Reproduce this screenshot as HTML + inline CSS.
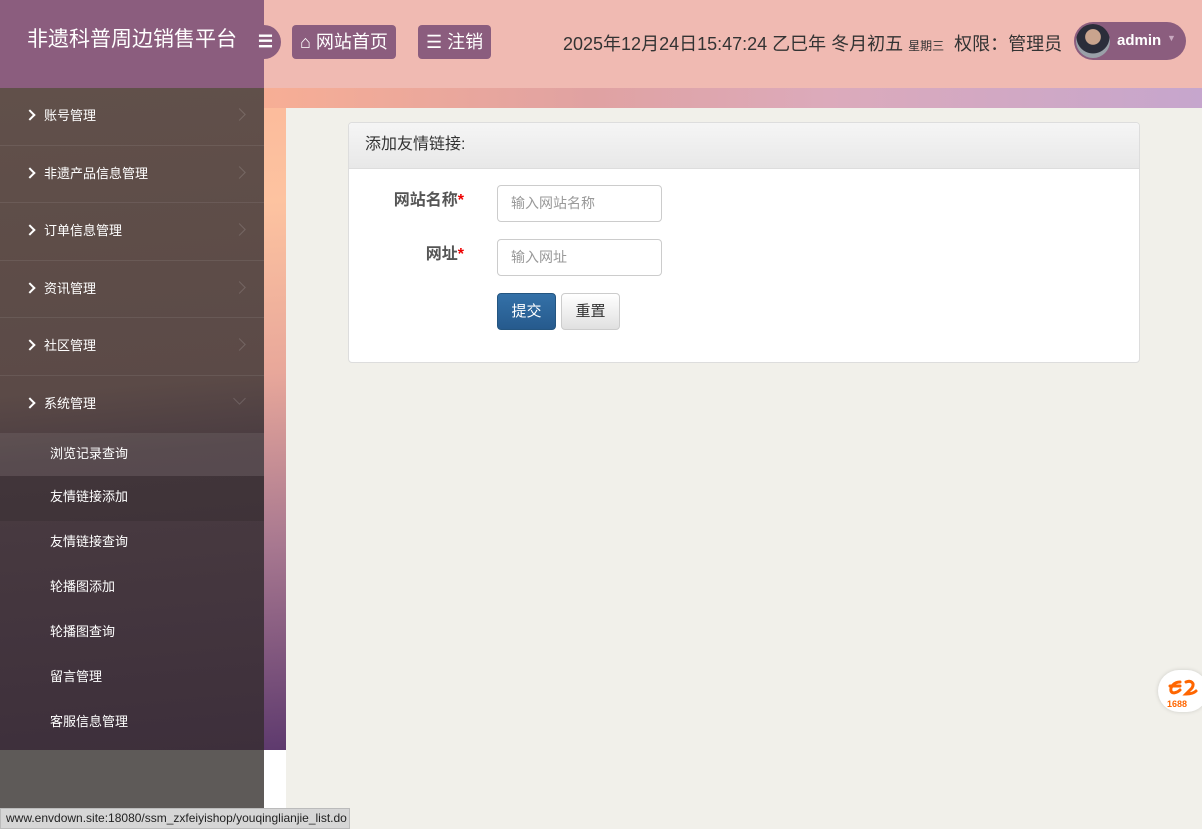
<!DOCTYPE html>
<html><head><meta charset="utf-8"><style>
*{margin:0;padding:0;box-sizing:border-box}
body{width:1202px;height:829px;overflow:hidden;position:relative;font-family:"Liberation Sans","Noto Sans CJK SC",sans-serif;background:#f1f0ea}
.bg{position:absolute;left:0;top:88px;width:286px;height:662px;background:linear-gradient(175deg,#fbb89a 0%,#fdc3a0 20%,#e8a79a 45%,#a87890 70%,#5e3a6e 100%)}
.strip{position:absolute;left:264px;top:88px;width:938px;height:20px;background:linear-gradient(90deg,#f7ae95,#e0a2a2 35%,#dcaabb 60%,#c6a6cd)}
.hdr{position:absolute;left:0;top:0;width:1202px;height:88px;background:#f0bab2}
.logo{position:absolute;left:0;top:0;width:264px;height:88px;background:#8b5d7e;color:#fff;font-size:21px;padding:23px 0 0 27px}
.tog{position:absolute;left:250px;top:25px;width:31px;height:34px;border-radius:0 17px 17px 0;background:#8b5d7e;color:#fff;font-size:17px;text-align:center;line-height:34px;font-weight:bold}
.btn{position:absolute;top:25px;height:34px;background:#8b5d7e;color:#fff;border-radius:4px;font-size:18px;line-height:34px;padding:0 8px}
.date{position:absolute;left:563px;top:30px;font-size:18px;color:#333}
.user{position:absolute;left:1074px;top:22px;width:112px;height:38px;border-radius:19px;background:#8b5d7e;color:#fff;font-size:15px}
.av{position:absolute;left:2px;top:2px;width:34px;height:34px;border-radius:50%;background:radial-gradient(circle at 50% 38%,#c9a48e 0 28%,#2b2d3a 30% 60%,#9aa0a8 62%)}
.side{position:absolute;left:0;top:88px;width:264px;height:662px;background:linear-gradient(175deg,#61504a,#5b4a47 45%,#4a3c41 55%,#3d2f3b)}
.m{height:57.5px;border-bottom:1px solid rgba(255,255,255,.08);color:#fff;font-size:13px;line-height:55px;padding-left:44px;position:relative}
.m:before{content:"";position:absolute;left:26px;top:23px;width:6px;height:6px;border-right:2px solid #fff;border-top:2px solid #fff;transform:rotate(45deg)}
.m:after{content:"";position:absolute;right:20px;top:22px;width:8px;height:8px;border-right:1px solid rgba(255,255,255,.15);border-top:1px solid rgba(255,255,255,.15);transform:rotate(45deg)}
.m.open:after{transform:rotate(135deg);top:18px}
.s{height:45px;line-height:42px;color:#fff;font-size:13px;padding-left:50px}
.sb{position:absolute;left:0;top:750px;width:264px;height:79px;background:#5e5a58}
.wb{position:absolute;left:264px;top:750px;width:22px;height:79px;background:#fff}
.status{position:absolute;left:0;top:808px;width:350px;height:21px;background:#d6d6d6;border:1px solid #bbb;font-size:12px;color:#222;line-height:19px;padding-left:5px}
.panel{position:absolute;left:348px;top:122px;width:792px;height:241px;background:#fff;border:1px solid #ddd;border-radius:4px}
.ph{height:46px;background:linear-gradient(#f5f5f5,#e8e8e8);border-bottom:1px solid #ddd;font-size:16px;color:#333;line-height:44px;padding-left:16px;border-radius:4px 4px 0 0}
.lb{position:absolute;font-size:16px;font-weight:bold;color:#555;text-align:right;width:100px}
.lb b{color:#e00}
.in{position:absolute;left:148px;width:165px;height:37px;border:1px solid #ccc;border-radius:4px;font-size:14px;color:#999;line-height:35px;padding-left:13px}
.b1{position:absolute;left:148px;top:170px;width:59px;height:37px;border-radius:4px;background:linear-gradient(#3471a8,#265a8d);color:#fff;font-size:15px;text-align:center;line-height:36px;border:1px solid #245580}
.b2{position:absolute;left:212px;top:170px;width:59px;height:37px;border-radius:4px;background:linear-gradient(#fff,#e0e0e0);color:#333;font-size:15px;text-align:center;line-height:36px;border:1px solid #ccc}
.ali{position:absolute;left:1158px;top:670px;width:50px;height:42px;border-radius:21px;background:#fff;box-shadow:0 0 4px rgba(0,0,0,.15)}
</style></head><body>
<div class="bg"></div>
<div class="strip"></div>
<div class="hdr"></div>
<div class="logo">非遗科普周边销售平台</div>
<div class="tog">☰</div>
<div class="btn" style="left:292px">⌂ 网站首页</div>
<div class="btn" style="left:418px">☰ 注销</div>
<div class="date">2025年12月24日15:47:24 乙巳年 冬月初五 <span style="font-size:12px">星期三</span>&nbsp; 权限：管理员</div>
<div class="user"><div class="av"></div><span style="position:absolute;left:43px;top:10px;font-weight:bold">admin</span><span style="position:absolute;left:93px;top:11px;font-size:9px;color:#c9a9c0">▼</span></div>
<div class="side">
<div class="m">账号管理</div><div class="m">非遗产品信息管理</div><div class="m">订单信息管理</div><div class="m">资讯管理</div><div class="m">社区管理</div><div class="m open" style="border:0">系统管理</div>
<div class="s" style="background:rgba(255,255,255,.08);height:43px">浏览记录查询</div>
<div class="s" style="background:rgba(0,0,0,.1)">友情链接添加</div>
<div class="s">友情链接查询</div><div class="s">轮播图添加</div><div class="s">轮播图查询</div><div class="s">留言管理</div><div class="s">客服信息管理</div>
</div>
<div class="sb"></div><div class="wb"></div>
<div class="panel"><div class="ph">添加友情链接:</div>
<div class="lb" style="left:15px;top:63px">网站名称<b>*</b></div>
<div class="in" style="top:62px">输入网站名称</div>
<div class="lb" style="left:15px;top:117px">网址<b>*</b></div>
<div class="in" style="top:116px">输入网址</div>
<div class="b1">提交</div><div class="b2">重置</div>
</div>
<div class="ali"><svg width="40" height="40" viewBox="0 0 40 40" style="position:absolute;left:4px;top:2px"><path d="M18 10c-6 0-10 5-9 9 1 3 6 2 9-1M8 14h10M24 10c5-2 9 1 6 6l-6 6c4 0 8-1 10-3" fill="none" stroke="#f60" stroke-width="3" stroke-linecap="round"/><text x="5" y="35" font-size="9" font-weight="bold" fill="#f60" font-family="Liberation Sans">1688</text></svg></div>
<div class="status">www.envdown.site:18080/ssm_zxfeiyishop/youqinglianjie_list.do</div>
</body></html>
